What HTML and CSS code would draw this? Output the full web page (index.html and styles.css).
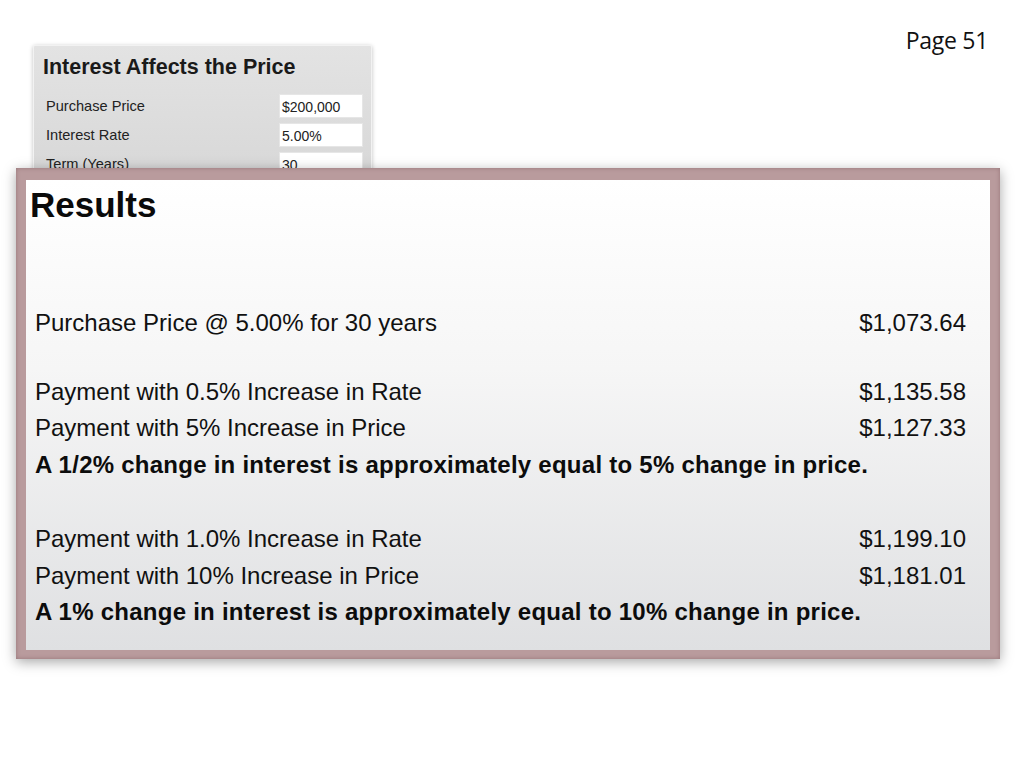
FILE: index.html
```html
<!DOCTYPE html>
<html>
<head>
<meta charset="utf-8">
<link rel="stylesheet" href="styles.css">
</head>
<body>
<div class="slide">
  <div class="page-num">Page 51</div>
  <div class="calc">
    <div class="calc-title">Interest Affects the Price</div>
    <div class="calc-row"><span class="calc-label">Purchase Price</span><span class="calc-input">$200,000</span></div>
    <div class="calc-row"><span class="calc-label">Interest Rate</span><span class="calc-input">5.00%</span></div>
    <div class="calc-row"><span class="calc-label">Term (Years)</span><span class="calc-input">30</span></div>
  </div>
  <div class="results">
    <div class="results-inner">
      <div class="results-title">Results</div>
      <div class="res-row first"><span>Purchase Price @ 5.00% for 30 years</span><span>$1,073.64</span></div>
      <div class="res-row gap"><span>Payment with 0.5% Increase in Rate</span><span>$1,135.58</span></div>
      <div class="res-row"><span>Payment with 5% Increase in Price</span><span>$1,127.33</span></div>
      <div class="res-note">A 1/2% change in interest is approximately equal to 5% change in price.</div>
      <div class="res-row gap wide"><span>Payment with 1.0% Increase in Rate</span><span>$1,199.10</span></div>
      <div class="res-row"><span>Payment with 10% Increase in Price</span><span>$1,181.01</span></div>
      <div class="res-note">A 1% change in interest is approximately equal to 10% change in price.</div>
    </div>
  </div>
</div>
</body>
</html>
```

FILE: styles.css
```css
* { box-sizing: border-box; }
html, body { margin: 0; padding: 0; background: #ffffff; }
body { font-family: "Liberation Sans", Arial, sans-serif; color: #111; }
.slide { position: relative; width: 1024px; height: 768px; overflow: hidden; padding: 45px 0 0 33px; }

.page-num {
  position: absolute; top: 24px; right: 36px;
  font-family: "Open Sans", "DejaVu Sans", sans-serif;
  font-size: 23px; color: #111; letter-spacing: -0.3px;
}

.calc {
  width: 339px; height: 150px;
  background: linear-gradient(#e3e3e3, #d6d6d6);
  border: 1px solid #f2f2f2;
  border-radius: 2px;
  box-shadow: 0 1px 4px rgba(0,0,0,0.25);
  padding: 8px 8px 0 9px;
}
.calc-title { font-weight: bold; font-size: 21.5px; color: #1a1a1a; margin-bottom: 14px; line-height: 26px; }
.calc-row { display: flex; justify-content: space-between; align-items: center; height: 24px; margin-bottom: 5px; padding-left: 3px; }
.calc-label { font-size: 14.6px; color: #222; }
.calc-input { width: 84px; height: 24px; background: #fff; font-size: 14px; color: #222; padding: 4px 0 0 2px; border: 1px solid #e6e6e6; }

.results {
  position: absolute; left: 16px; top: 168px;
  width: 984px; height: 491px;
  background: #b99b9d;
  padding: 12px 10px 9px 10px;
  box-shadow: 0 3px 12px rgba(0,0,0,0.35), inset 0 0 4px rgba(90,50,55,0.35);
}
.results-inner {
  height: 100%;
  background: linear-gradient(#ffffff 0%, #f6f6f6 40%, #dfe0e2 100%);
  padding: 4px 24px 0 4px;
}
.results-title { font-weight: bold; font-size: 35px; color: #0a0a0a; line-height: 42px; margin-bottom: 79px; }
.res-row { display: flex; justify-content: space-between; font-size: 24px; line-height: 36.5px; padding-left: 5px; color: #111; }
.res-row.gap { margin-top: 32px; }
.res-row.gap.wide { margin-top: 38px; }
.res-note { font-weight: bold; font-size: 24px; line-height: 36.5px; padding-left: 5px; color: #0c0c0c; letter-spacing: 0.25px; }
```
